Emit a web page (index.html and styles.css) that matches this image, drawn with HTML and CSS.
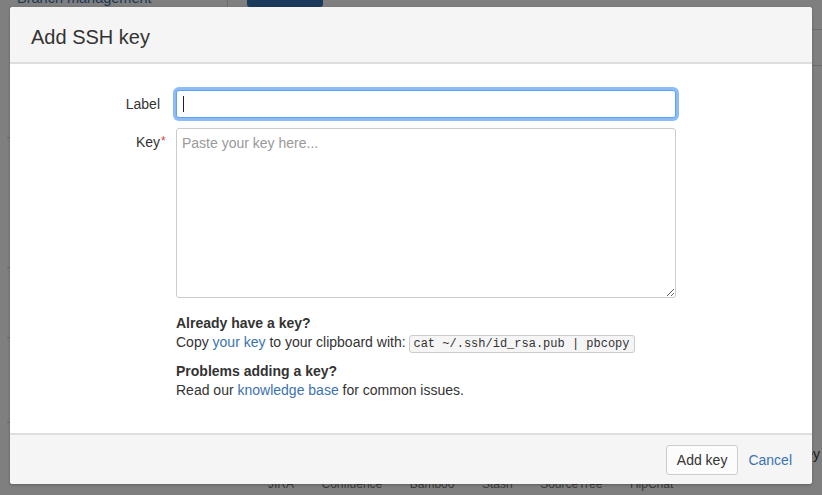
FILE: index.html
```html
<!DOCTYPE html>
<html lang="en">
<head>
<meta charset="utf-8">
<title>Add SSH key</title>
<link rel="stylesheet" href="styles.css">
</head>
<body>
<div class="page">
  <div class="layout">
    <aside class="sidebar">
      <div class="nav-item">Branch management</div>
      <div class="rows">
        <div class="row r1"></div>
        <div class="row r2"></div>
        <div class="row r3"></div>
        <div class="row r4"></div>
      </div>
    </aside>
    <main class="main">
      <div class="btn-primary"></div>
      <div class="panel-line l1"></div>
      <div class="panel-line l2"></div>
      <div class="main-note">key</div>
    </main>
  </div>
  <div class="page-footer">
    <span>JIRA</span><span>Confluence</span><span>Bamboo</span><span>Stash</span><span>SourceTree</span><span>HipChat</span>
  </div>

  <section class="dialog">
    <header class="dialog-header">
      <h2 class="dialog-title">Add SSH key</h2>
    </header>
    <div class="dialog-body">
      <form class="form">
        <label class="field-label" for="label"><span class="lbl">Label</span></label>
        <div class="field">
          <div class="input-wrap">
            <input class="text-input" id="label" type="text">
            <span class="caret"></span>
          </div>
        </div>
        <label class="field-label" for="key"><span class="lbl">Key<span class="req">*</span></span></label>
        <div class="field">
          <textarea class="textarea" id="key" placeholder="Paste your key here..."></textarea>
        </div>
        <div class="help">
          <h5 class="help-title">Already have a key?</h5>
          <p class="help-text">Copy <a href="#">your key</a> to your clipboard with: <code class="code">cat ~/.ssh/id_rsa.pub | pbcopy</code></p>
          <h5 class="help-title">Problems adding a key?</h5>
          <p class="help-text">Read our <a href="#">knowledge base</a> for common issues.</p>
        </div>
      </form>
    </div>
    <footer class="dialog-footer">
      <button class="button" type="button">Add key</button>
      <a class="cancel" href="#">Cancel</a>
    </footer>
  </section>
</div>
</body>
</html>
```

FILE: styles.css
```css
* { box-sizing: border-box; }

html, body {
  margin: 0;
  padding: 0;
}

body {
  background: #7f7f7f;
  font-family: "Liberation Sans", Arial, sans-serif;
  font-size: 14px;
  color: #333;
  overflow: hidden;
  width: 822px;
  height: 495px;
}

.page {
  position: relative;
  width: 822px;
  height: 495px;
  overflow: hidden;
}

/* background page (dimmed) */
.layout {
  display: flex;
  align-items: flex-start;
  height: 476px;
}

.sidebar {
  width: 228px;
  flex: none;
  border-right: 1px solid #6c6c6c;
  height: 430px;
}

.nav-item {
  margin-top: -12px;
  padding-left: 17px;
  font-size: 14.5px;
  line-height: 20px;
  color: #1e3656;
  white-space: nowrap;
}

.rows {
  margin-left: 7px;
}

.row { border-bottom: 1px solid #6c6c6c; }
.r1 { height: 130px; }
.r2 { height: 130px; }
.r3 { height: 70px; }
.r4 { height: 85px; }

.main {
  flex: 1;
  display: flex;
  flex-direction: column;
  height: 476px;
  padding-left: 19px;
}

.btn-primary {
  width: 76px;
  height: 30px;
  margin-top: -23px;
  background: #1c3a5c;
  border-radius: 3px;
  flex: none;
}

.panel-line {
  border-top: 1px solid #6c6c6c;
  flex: none;
}
.l1 { margin-top: 22px; }
.l2 { margin-top: 35px; }

.main-note {
  margin-top: auto;
  margin-bottom: 12px;
  text-align: right;
  padding-right: 2px;
  line-height: 20px;
  color: #1a1a1a;
}

.page-footer {
  display: flex;
  gap: 27.5px;
  padding-left: 268px;
  font-size: 12px;
  line-height: 17px;
  color: #3a3a3a;
}

/* dialog */
.dialog {
  position: absolute;
  top: 7px;
  left: 10px;
  width: 802px;
  height: 477px;
  display: flex;
  flex-direction: column;
  background: #fff;
  border-radius: 3px;
  overflow: hidden;
  box-shadow: 0 1px 3px rgba(0, 0, 0, 0.25);
}

.dialog-header {
  flex: none;
  height: 57px;
  padding: 15px 21px 0;
  background: #f5f5f5;
  border-bottom: 2px solid #dedede;
}

.dialog-title {
  margin: 0;
  font-size: 20px;
  font-weight: normal;
  line-height: 30px;
  color: #333;
}

.dialog-body {
  flex: 1;
  padding-top: 26px;
}

.form {
  display: grid;
  grid-template-columns: 150px 500px;
  column-gap: 16px;
  row-gap: 10px;
  margin: 0;
}

.field-label {
  text-align: right;
  padding-top: 4px;
  line-height: 20px;
  color: #333;
}

.lbl {
  position: relative;
}

.req {
  position: absolute;
  left: 100%;
  top: -3px;
  margin-left: 1px;
  font-size: 12px;
  color: #d04437;
}

.input-wrap {
  position: relative;
}

.text-input {
  display: block;
  width: 500px;
  height: 28px;
  margin: 0;
  padding: 4px 5px;
  font: 14px/20px "Liberation Sans", Arial, sans-serif;
  color: #333;
  background: #fff;
  border: 1px solid #5fa0f0;
  border-radius: 3px;
  box-shadow: 0 0 0 3px rgba(120, 176, 246, 0.85);
  outline: none;
}

.caret {
  position: absolute;
  left: 7px;
  top: 6px;
  width: 1px;
  height: 16px;
  background: #222;
}

.textarea {
  display: block;
  width: 500px;
  height: 170px;
  margin: 0;
  padding: 4px 5px;
  font: 14px/20px "Liberation Sans", Arial, sans-serif;
  color: #333;
  background: #fff;
  border: 1px solid #cccccc;
  border-radius: 3px;
  outline: none;
}

.textarea::placeholder {
  color: #999;
  opacity: 1;
}

.help {
  grid-column: 2;
  margin-top: 6px;
}

.help-title {
  margin: 0;
  font-size: 14px;
  font-weight: bold;
  line-height: 19px;
  color: #333;
}

.help-text {
  margin: 0 0 10px;
  line-height: 19px;
  color: #333;
}

.help-text a,
.cancel {
  color: #3b73af;
  text-decoration: none;
}

.code {
  font-family: "Liberation Mono", "Courier New", monospace;
  font-size: 12px;
  line-height: 14px;
  padding: 1px 4px 1px 3px;
  background: #f5f5f5;
  border: 1px solid #cccccc;
  border-radius: 3px;
  color: #333;
}

.dialog-footer {
  flex: none;
  height: 51px;
  display: flex;
  justify-content: flex-end;
  align-items: flex-start;
  gap: 10px;
  padding: 10px 20px 0;
  background: #f5f5f5;
  border-top: 2px solid #dedede;
}

.button {
  height: 30px;
  margin: 0;
  padding: 0 10px;
  font: 14px/28px "Liberation Sans", Arial, sans-serif;
  color: #333;
  background: #fcfcfc;
  border: 1px solid #cccccc;
  border-radius: 3px;
}

.cancel {
  line-height: 30px;
}
```
